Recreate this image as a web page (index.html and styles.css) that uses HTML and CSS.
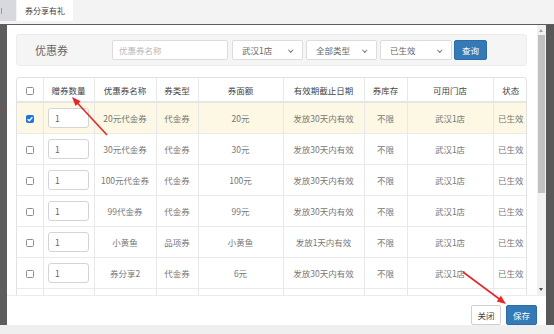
FILE: index.html
```html
<!DOCTYPE html>
<html lang="zh">
<head>
<meta charset="utf-8">
<title>券分享有礼</title>
<link rel="stylesheet" href="styles.css">
</head>
<body>
<div class="topbar">
  <div class="tab tab-prev"><span class="tab-cut"></span></div>
  <div class="tab tab-active">券分享有礼</div>
</div>
<div class="stage">
  <div class="gutter-left"><span class="bg-mark"></span></div>
  <div class="modal">
    <div class="modal-main">
      <div class="modal-body">
        <div class="filter">
          <div class="filter-title">优惠券</div>
          <div class="field input-name">优惠券名称</div>
          <div class="field select sel-store">武汉1店<span class="chev"></span></div>
          <div class="field select sel-type">全部类型<span class="chev"></span></div>
          <div class="field select sel-status">已生效<span class="chev"></span></div>
          <div class="btn-query">查询</div>
        </div>
        <div class="table-wrap">
          <table class="grid">
            <colgroup>
              <col class="c1"><col class="c2"><col class="c3"><col class="c4"><col class="c5"><col class="c6"><col class="c7"><col class="c8"><col class="c9">
            </colgroup>
            <thead>
              <tr>
                <th><span class="cb"></span></th>
                <th>赠券数量</th>
                <th>优惠券名称</th>
                <th>券类型</th>
                <th>券面额</th>
                <th>有效期截止日期</th>
                <th>券库存</th>
                <th>可用门店</th>
                <th>状态</th>
              </tr>
            </thead>
            <tbody>
              <tr class="selected">
                <td><span class="cb checked"><svg viewBox="0 0 8 8" width="8" height="8"><path d="M1.6 4.2 L3.3 5.8 L6.4 2.3" fill="none" stroke="#fff" stroke-width="1.4"/></svg></span></td>
                <td><span class="qty">1</span></td>
                <td>20元代金券</td><td>代金券</td><td>20元</td><td>发放30天内有效</td><td>不限</td><td>武汉1店</td><td>已生效</td>
              </tr>
              <tr>
                <td><span class="cb"></span></td><td><span class="qty">1</span></td>
                <td>30元代金券</td><td>代金券</td><td>30元</td><td>发放30天内有效</td><td>不限</td><td>武汉1店</td><td>已生效</td>
              </tr>
              <tr>
                <td><span class="cb"></span></td><td><span class="qty">1</span></td>
                <td>100元代金券</td><td>代金券</td><td>100元</td><td>发放30天内有效</td><td>不限</td><td>武汉1店</td><td>已生效</td>
              </tr>
              <tr>
                <td><span class="cb"></span></td><td><span class="qty">1</span></td>
                <td>99代金券</td><td>代金券</td><td>99元</td><td>发放30天内有效</td><td>不限</td><td>武汉1店</td><td>已生效</td>
              </tr>
              <tr>
                <td><span class="cb"></span></td><td><span class="qty">1</span></td>
                <td>小黄鱼</td><td>品项券</td><td>小黄鱼</td><td>发放1天内有效</td><td>不限</td><td>武汉1店</td><td>已生效</td>
              </tr>
              <tr>
                <td><span class="cb"></span></td><td><span class="qty">1</span></td>
                <td>券分享2</td><td>代金券</td><td>6元</td><td>发放30天内有效</td><td>不限</td><td>武汉1店</td><td>已生效</td>
              </tr>
              <tr class="partial">
                <td></td><td><span class="qty qty-empty"></span></td>
                <td></td><td></td><td></td><td></td><td></td><td></td><td></td>
              </tr>
            </tbody>
          </table>
        </div>
      </div>
      <div class="scrollbar">
        <span class="arrow-up"></span>
        <span class="thumb"></span>
        <span class="arrow-down"></span>
      </div>
    </div>
    <div class="modal-footer">
      <div class="btn btn-close">关闭</div>
      <div class="btn btn-save">保存</div>
    </div>
  </div>
  <div class="gutter-right"></div>
</div>
<div class="bottombar"></div>

<svg class="annotations" width="554" height="334" viewBox="0 0 554 334">
  <line x1="107" y1="135" x2="76" y2="101.5" stroke="#e8262a" stroke-width="1.6"/>
  <polygon points="72,97 80.7,101.2 75.5,106" fill="#e8262a"/>
  <line x1="463" y1="272" x2="500" y2="299.5" stroke="#e8262a" stroke-width="1.6"/>
  <polygon points="506,304 496.7,301.4 500.9,295.8" fill="#e8262a"/>
</svg>
</body>
</html>
```

FILE: styles.css
```css
* { box-sizing: border-box; }
html, body { margin: 0; padding: 0; }
body {
  width: 554px;
  height: 334px;
  overflow: hidden;
  background: #5f5f5f;
  font-family: "Noto Sans CJK SC", "Noto Sans", sans-serif;
  color: #777;
  position: relative;
}

/* top tab strip */
.topbar {
  height: 24px;
  background: #f3f3f3;
  display: flex;
  align-items: flex-start;
}
.tab {
  height: 21px;
  display: flex;
  align-items: center;
  font-size: 8px;
  color: #444;
}
.tab-prev {
  width: 16px;
  background: #d8d9de;
  overflow: hidden;
  justify-content: flex-start;
}
.tab-cut {
  display: block;
  width: 1px;
  height: 6px;
  margin-left: 1px;
  background: #9a9a9a;
}
.tab-active {
  margin-left: 1px;
  width: 56px;
  background: #fff;
  justify-content: center;
}

/* stage with overlay */
.stage {
  height: 301px;
  display: flex;
  padding-top: 1px;
  background: #5e5e5e;
}
.gutter-left {
  width: 7px;
  background: #5d5d5d;
  position: relative;
}
.bg-mark {
  position: absolute;
  left: 2px;
  top: 83px;
  width: 2px;
  height: 2px;
  background: #c33;
}
.gutter-right {
  flex: 1;
  background: #585858;
}

.modal {
  width: 539px;
  background: #fff;
  display: flex;
  flex-direction: column;
}
.modal-main {
  flex: 1;
  display: flex;
  overflow: hidden;
  min-height: 0;
}
.modal-body {
  width: 530px;
  padding: 9px 10px 0 9px;
  overflow: hidden;
}

/* filter panel */
.filter {
  height: 32px;
  background: #f5f5f5;
  border: 1px solid #ececec;
  border-radius: 3px;
  display: flex;
  align-items: center;
}
.filter-title {
  width: 95px;
  padding-left: 18px;
  font-size: 11px;
  color: #666;
}
.field {
  height: 20px;
  background: #fff;
  border: 1px solid #dcdcdc;
  border-radius: 2px;
  font-size: 8.5px;
  display: flex;
  align-items: center;
  padding-left: 6px;
  color: #666;
  position: relative;
}
.input-name { width: 116px; color: #b8b8b8; }
.select { padding-left: 9px; }
.sel-store { width: 71px; margin-left: 4px; }
.sel-type { width: 71px; margin-left: 3px; }
.sel-status { width: 72px; margin-left: 3px; }
.chev {
  position: absolute;
  right: 10px;
  top: 7px;
  width: 3.5px;
  height: 3.5px;
  border-right: 1px solid #777;
  border-bottom: 1px solid #777;
  transform: rotate(45deg);
}
.btn-query {
  margin-left: 2px;
  width: 33px;
  height: 20px;
  background: #337ab7;
  border: 1px solid #2e6da4;
  border-radius: 2px;
  color: #fff;
  font-size: 8.5px;
  display: flex;
  align-items: center;
  justify-content: center;
}

/* table */
.table-wrap {
  margin-top: 11px;
  border: 1px solid #e2e2e2;
  border-radius: 3px;
  overflow: hidden;
  width: 511px;
}
.grid {
  width: 100%;
  border-collapse: collapse;
  table-layout: fixed;
  font-size: 8.5px;
}
.c1 { width: 26px; }
.c2 { width: 51px; }
.c3 { width: 62px; }
.c4 { width: 42px; }
.c5 { width: 85px; }
.c6 { width: 81px; }
.c7 { width: 43px; }
.c8 { width: 86px; }
.c9 { width: 35px; }
.grid th, .grid td {
  text-align: center;
  border-left: 1px solid #e8e8e8;
  padding: 0;
  white-space: nowrap;
  overflow: hidden;
}
.grid th:first-child, .grid td:first-child { border-left: 0; }
.grid th {
  height: 24px;
  font-weight: normal;
  color: #444;
  border-bottom: 2px solid #e6e6e6;
}
.grid td {
  height: 31px;
  color: #777;
  border-top: 1px solid #eaeaea;
}
.grid tbody tr:first-child td { border-top: 0; }
.grid tr.selected td { background: #fcf8e3; }
.grid tr.partial td { vertical-align: top; padding-top: 6px; }

.cb {
  display: inline-block;
  width: 8px;
  height: 8px;
  border: 1px solid #8e8e8e;
  border-radius: 1.5px;
  background: #fff;
  vertical-align: middle;
  position: relative;
}
.cb.checked {
  background: #1a73e8;
  border-color: #1a73e8;
}
.cb svg { position: absolute; left: -1px; top: -1px; }

.qty {
  display: flex;
  align-items: center;
  width: 41px;
  height: 20px;
  margin: 0 auto;
  border: 1px solid #d4d4d4;
  border-radius: 3px;
  background: #fff;
  padding-left: 6px;
  color: #666;
  font-size: 8.5px;
}

/* scrollbar */
.scrollbar {
  width: 9px;
  background: #f1f1f1;
  position: relative;
}
.arrow-up, .arrow-down {
  position: absolute;
  left: 2px;
  width: 0;
  height: 0;
  border-left: 2.5px solid transparent;
  border-right: 2.5px solid transparent;
}
.arrow-up { top: 4px; border-bottom: 3px solid #a3a3a3; }
.arrow-down { bottom: 4px; border-top: 3px solid #505050; }
.thumb {
  position: absolute;
  left: 1px;
  right: 1px;
  top: 10px;
  height: 158px;
  background: #c1c1c1;
}

/* footer */
.modal-footer {
  height: 30px;
  border-top: 1px solid #ececec;
  display: flex;
  justify-content: flex-end;
  align-items: flex-end;
  padding-right: 9px;
  gap: 5px;
}
.btn {
  height: 20px;
  border-radius: 2px;
  font-size: 8.5px;
  display: flex;
  align-items: center;
  justify-content: center;
}
.btn-close {
  width: 30px;
  border: 1px solid #cfcfcf;
  background: #fff;
  color: #444;
}
.btn-save {
  width: 31px;
  border: 1px solid #2e6da4;
  background: #337ab7;
  color: #fff;
}

.bottombar {
  height: 9px;
  background: #efefef;
}

.annotations {
  position: absolute;
  left: 0;
  top: 0;
  pointer-events: none;
}
```
